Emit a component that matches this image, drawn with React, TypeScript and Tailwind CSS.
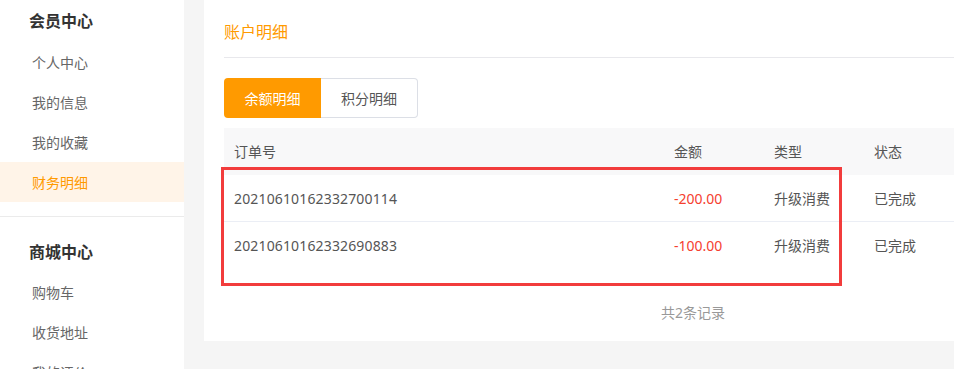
import React from "react";

const font = { fontFamily: '"Noto Sans", "Noto Sans CJK SC", sans-serif' };

const rows = [
  { id: "20210610162332700114", amount: "-200.00", type: "升级消费", status: "已完成" },
  { id: "20210610162332690883", amount: "-100.00", type: "升级消费", status: "已完成" },
];

export default function App() {
  return (
    <div
      className="flex h-[369px] w-[954px] overflow-hidden bg-[#f5f5f5]"
      style={font}
    >
      {/* Sidebar */}
      <aside className="w-[184px] shrink-0 self-start bg-white">
        <div className="border-b border-[#ebebeb] pb-[14px]">
          <div className="flex h-[42px] items-center pl-[29px] text-[16px] font-bold text-[#333]">
            会员中心
          </div>
          <div className="flex h-10 items-center pl-[32px] text-[14px] text-[#666]">个人中心</div>
          <div className="flex h-10 items-center pl-[32px] text-[14px] text-[#666]">我的信息</div>
          <div className="flex h-10 items-center pl-[32px] text-[14px] text-[#666]">我的收藏</div>
          <div className="flex h-10 items-center bg-[#fff4e8] pl-[32px] text-[14px] text-[#ff9a00]">
            财务明细
          </div>
        </div>
        <div className="pt-[15px]">
          <div className="flex h-[40px] items-center pl-[29px] text-[16px] font-bold text-[#333]">
            商城中心
          </div>
          <div className="flex h-10 items-center pl-[32px] text-[14px] text-[#666]">购物车</div>
          <div className="flex h-10 items-center pl-[32px] text-[14px] text-[#666]">收货地址</div>
          <div className="flex h-10 items-center pl-[32px] text-[14px] text-[#666]">我的评价</div>
        </div>
      </aside>

      {/* Main */}
      <main className="ml-[20px] h-[341px] flex-1 overflow-hidden bg-white pl-[20px]">
        <div className="border-b border-[#e8e8ec] pt-[21px] pb-[14px] text-[16px] leading-[22px] text-[#ff9a00]">
          账户明细
        </div>

        <div className="mt-[20px] flex">
          <div className="flex h-10 w-[97px] items-center justify-center rounded-l-[4px] bg-[#ff9a00] text-[14px] text-white">
            余额明细
          </div>
          <div className="flex h-10 w-[97px] items-center justify-center rounded-r-[4px] border border-l-0 border-[#dcdfe6] text-[14px] text-[#555]">
            积分明细
          </div>
        </div>

        <div className="relative mt-[10px] w-[760px]">
          <div className="flex h-[47px] items-center bg-[#f8f8f9] text-[14px] text-[#555]">
            <div className="w-[440px] pl-[10px]">订单号</div>
            <div className="w-[100px] pl-[10px]">金额</div>
            <div className="w-[100px] pl-[10px]">类型</div>
            <div className="flex-1 pl-[10px]">状态</div>
          </div>
          {rows.map((r, i) => (
            <div
              key={r.id}
              className={
                "flex h-[47px] items-center text-[14px] text-[#555] " +
                (i === 0 ? "border-b border-[#ebeef5]" : "")
              }
            >
              <div className="w-[440px] pl-[10px] tracking-[0.15px]">{r.id}</div>
              <div className="w-[100px] pl-[10px] text-[#f5402f]">{r.amount}</div>
              <div className="w-[100px] pl-[10px]">{r.type}</div>
              <div className="flex-1 pl-[10px]">{r.status}</div>
            </div>
          ))}
          <div className="pointer-events-none absolute left-[-3px] top-[39px] h-[119px] w-[621px] border-[3px] border-[#f23c3c]" />
        </div>

        <div className="pt-[33px] pl-[437px] text-[14px] leading-[22px] text-[#999]">
          共2条记录
        </div>
      </main>
    </div>
  );
}
